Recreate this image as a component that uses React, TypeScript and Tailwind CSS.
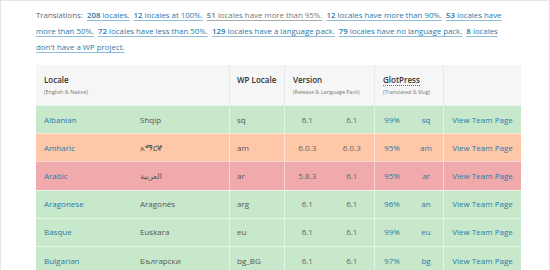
import React from "react";

type Row = {
    name: string;
    native: string;
    wp: string;
    release: string;
    pack: string;
    percent: string;
    slug: string;
    status: "full" | "partial" | "low";
};

const rows: Row[] = [
    {name: "Albanian", native: "Shqip", wp: "sq", release: "6.1", pack: "6.1", percent: "99%", slug: "sq", status: "full"},
    {name: "Amharic", native: "አማርኛ", wp: "am", release: "6.0.3", pack: "6.0.3", percent: "95%", slug: "am", status: "partial"},
    {name: "Arabic", native: "العربية", wp: "ar", release: "5.8.3", pack: "6.1", percent: "95%", slug: "ar", status: "low"},
    {name: "Aragonese", native: "Aragonés", wp: "arg", release: "6.1", pack: "6.1", percent: "96%", slug: "an", status: "full"},
    {name: "Basque", native: "Euskara", wp: "eu", release: "6.1", pack: "6.1", percent: "99%", slug: "eu", status: "full"},
    {name: "Bulgarian", native: "Български", wp: "bg_BG", release: "6.1", pack: "6.1", percent: "97%", slug: "bg", status: "full"},
];

const rowBg = {
    full: "bg-[#c8e8cb]",
    partial: "bg-[#fec7a8]",
    low: "bg-[#f1aaab]",
};

const links: {num: string; rest: string; visited?: boolean}[] = [
    {num: "208", rest: " locales."},
    {num: "12", rest: " locales at 100%."},
    {num: "51", rest: " locales have more than 95%.", visited: true},
    {num: "12", rest: " locales have more than 90%."},
    {num: "53", rest: " locales have more than 50%."},
    {num: "72", rest: " locales have less than 50%."},
    {num: "129", rest: " locales have a language pack."},
    {num: "79", rest: " locales have no language pack."},
    {num: "8", rest: " locales don't have a WP project."},
];

export default function App() {
    return (
        <div className="w-[550px] h-[270px] overflow-hidden bg-white border border-b-0 border-[#e6e6e6] font-['Open_Sans',sans-serif]">
            {/* Summary */}
            <p className="ml-[35px] w-[480px] pt-[6px] text-[7.85px] leading-[16px] text-[#666]">
                Translations:&nbsp;{" "}
                {links.map((l, i) => (
                    <React.Fragment key={i}>
                        <a
                            href="#"
                            className={
                                "underline decoration-[1px] underline-offset-[2px] " +
                                (l.visited ? "text-[#777] decoration-[#aaa]" : "text-[#2a79ab] decoration-[#8fbddb]")
                            }
                        >
                            <strong className="font-semibold">{l.num}</strong>{l.rest}
                        </a>&nbsp;{" "}
                    </React.Fragment>
                ))}
            </p>

            {/* Table */}
            <div className="ml-[35px] mt-[10px] w-[485px] text-[8px]">
                <div className="flex h-[40px] bg-[#f6f6f6] text-[#333]">
                    <div className="w-[194px] pl-[8px] pt-[9px] border-r border-[#e9e9e9]">
                        <div className="font-semibold leading-[12px]">Locale</div>
                        <div className="text-[5.4px] text-[#777] mt-[2px]">(English &amp; Native)</div>
                    </div>
                    <div className="w-[55px] pl-[7px] pt-[9px] border-r border-[#e9e9e9]">
                        <div className="font-semibold leading-[12px]">WP Locale</div>
                    </div>
                    <div className="w-[90px] pl-[8px] pt-[9px] border-r border-[#e9e9e9]">
                        <div className="font-semibold leading-[12px]">Version</div>
                        <div className="text-[5.4px] text-[#777] mt-[2px]">(Release &amp; Language Pack)</div>
                    </div>
                    <div className="w-[69px] pl-[8px] pt-[9px] border-r border-[#e9e9e9]">
                        <div className="font-semibold leading-[12px]">
                            <abbr className="no-underline border-b border-dotted border-[#666]">GlotPress</abbr>
                        </div>
                        <div className="text-[5.4px] text-[#777] mt-[2px]">(Translated &amp; Slug)</div>
                    </div>
                    <div className="flex-1" />
                </div>

                {rows.map((r) => (
                    <div key={r.wp} className={"flex h-[28.2px] items-stretch border-t border-white/50 " + rowBg[r.status]}>
                        <div className="w-[194px] flex items-center border-r border-white/50">
                            <a href="#" className="w-[96px] pl-[8px] text-[#2a79ab]">{r.name}</a>
                            <span className="pl-[8px] text-[#555] font-['Open_Sans','DejaVu_Sans',sans-serif]">{r.native}</span>
                        </div>
                        <div className="w-[55px] pl-[7px] flex items-center text-[#555] border-r border-white/50">{r.wp}</div>
                        <div className="w-[90px] flex items-center text-[#666] border-r border-white/50">
                            <span className="flex-1 text-center">{r.release}</span>
                            <span className="flex-1 text-center">{r.pack}</span>
                        </div>
                        <div className="w-[69px] flex items-center text-[#2a79ab] border-r border-white/50">
                            <span className="flex-1 text-center">{r.percent}</span>
                            <span className="flex-1 text-center">{r.slug}</span>
                        </div>
                        <a href="#" className="flex-1 flex items-center justify-center text-[#2a79ab]">View Team Page</a>
                    </div>
                ))}
            </div>
        </div>
    );
}
